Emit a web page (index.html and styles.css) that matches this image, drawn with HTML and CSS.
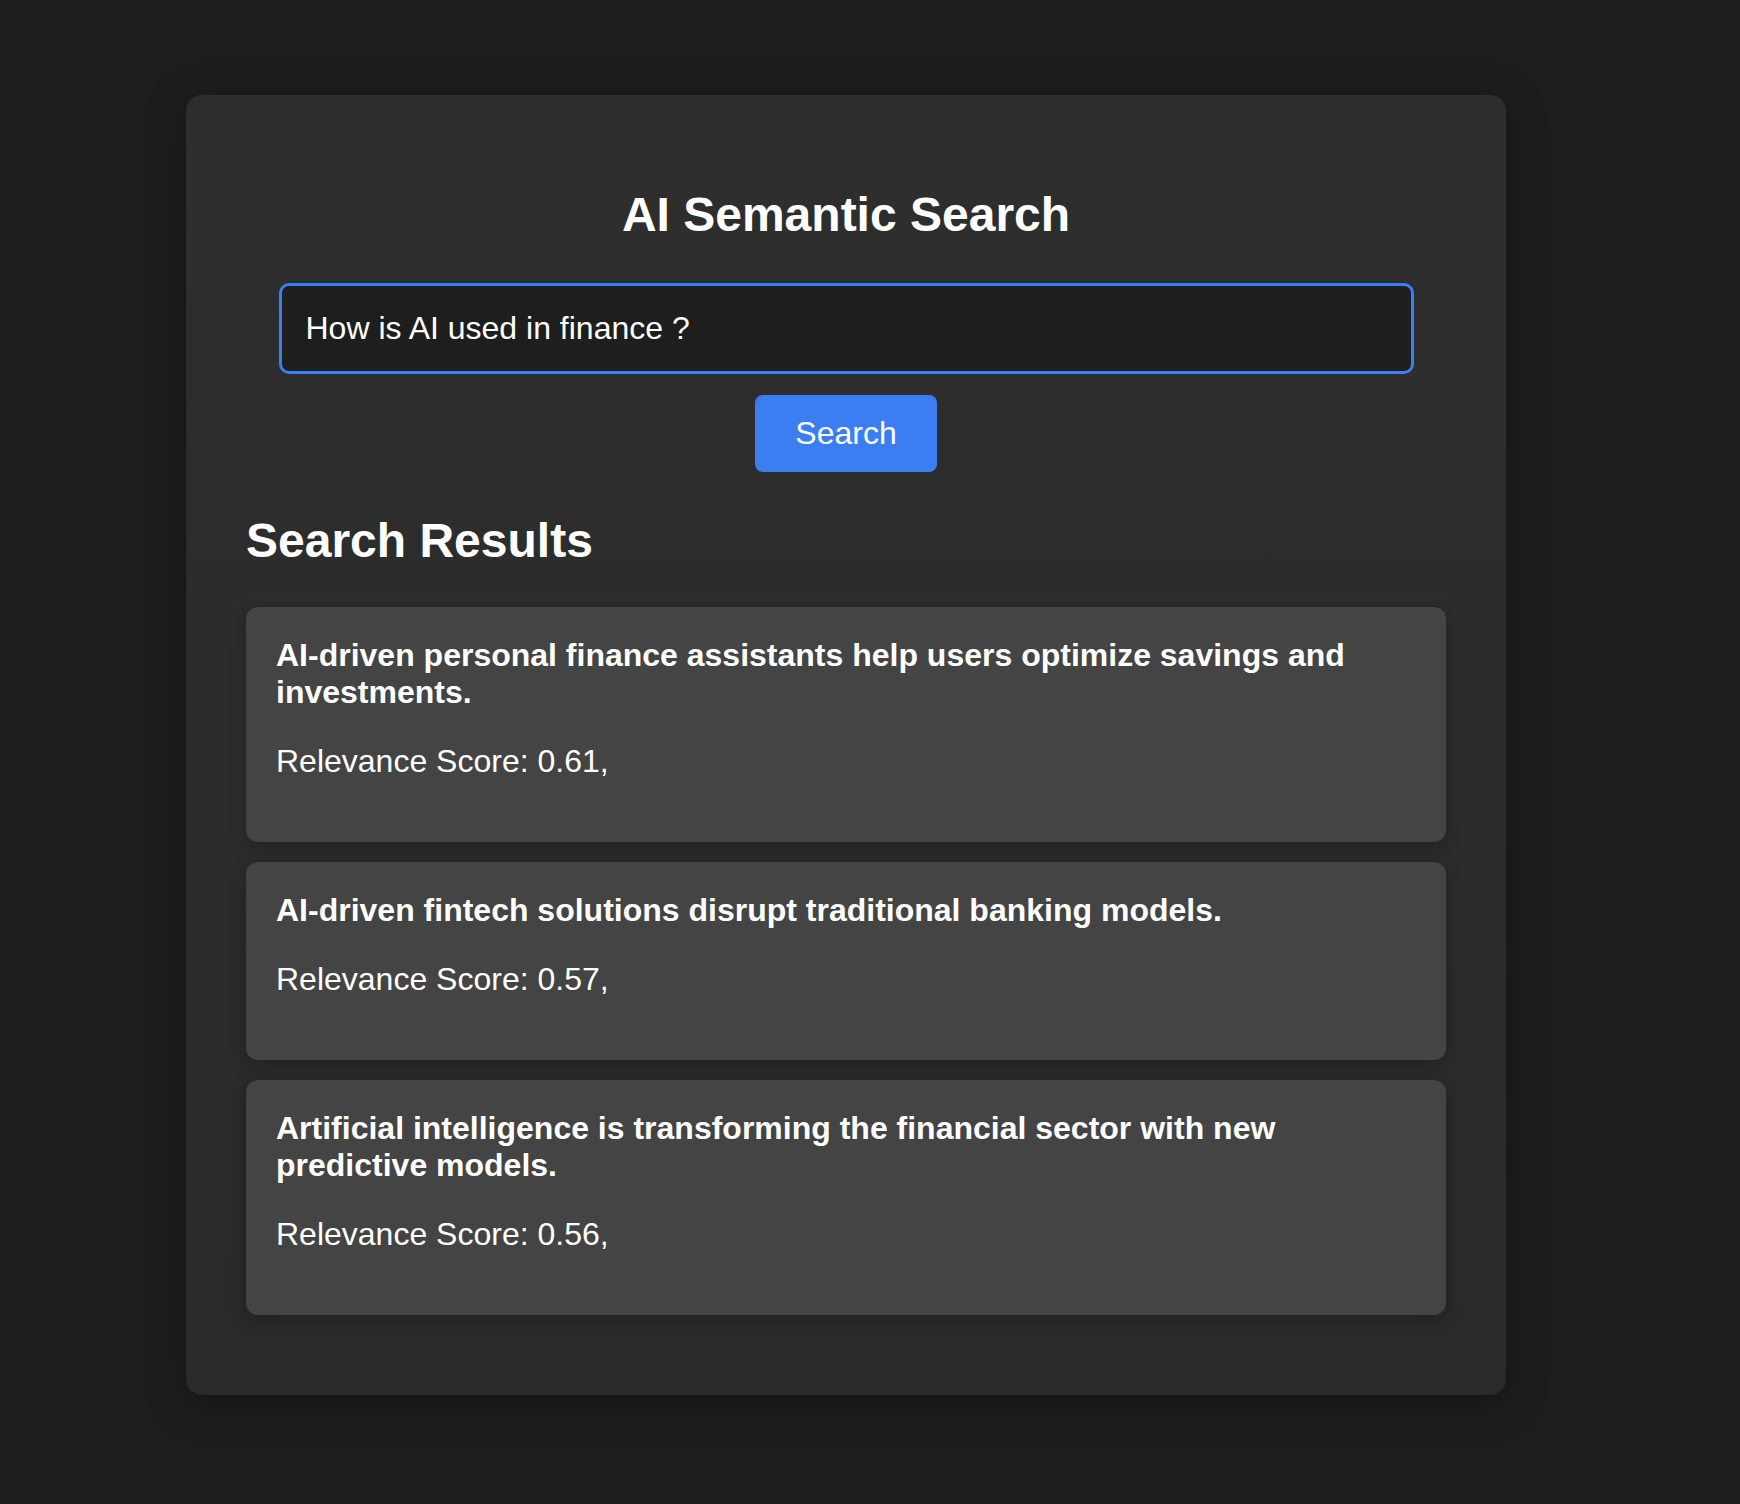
FILE: index.html
```html
<!DOCTYPE html>
<html lang="en">
<head>
<meta charset="utf-8">
<title>AI Semantic Search</title>
<link rel="stylesheet" href="styles.css">
</head>
<body>
  <main class="panel">
    <h1 class="title">AI Semantic Search</h1>
    <div class="search">
      <input class="search-input" type="text" value="How is AI used in finance ?">
      <button class="search-btn" type="button">Search</button>
    </div>
    <h2 class="results-title">Search Results</h2>
    <div class="results">
      <div class="result">
        <p class="result-text">AI-driven personal finance assistants help users optimize savings and investments.</p>
        <p class="result-score">Relevance Score: 0.61,</p>
      </div>
      <div class="result">
        <p class="result-text">AI-driven fintech solutions disrupt traditional banking models.</p>
        <p class="result-score">Relevance Score: 0.57,</p>
      </div>
      <div class="result">
        <p class="result-text">Artificial intelligence is transforming the financial sector with new predictive models.</p>
        <p class="result-score">Relevance Score: 0.56,</p>
      </div>
    </div>
  </main>
</body>
</html>
```

FILE: styles.css
```css
* { box-sizing: border-box; }

html, body {
  margin: 0;
  padding: 0;
  background: #1e1e1e;
}

body {
  font-family: "Liberation Sans", Arial, Helvetica, sans-serif;
  color: #ffffff;
  padding: 95px 0 109px 186px;
  min-height: 1504px;
}

.panel {
  width: 1320px;
  padding: 60px 60px 80px;
  background: linear-gradient(180deg, #2e2e2e 0%, #2a2a2a 100%);
  border-radius: 16px;
  box-shadow: 0 8px 40px rgba(0, 0, 0, 0.35);
}

.title {
  margin: 32px 0 41px;
  font-size: 48px;
  font-weight: 700;
  text-align: center;
  line-height: normal;
}

.search {
  display: flex;
  flex-direction: column;
  align-items: center;
}

.search-input {
  width: 1135px;
  padding: 24px;
  font-family: inherit;
  font-size: 32px;
  line-height: normal;
  color: #ffffff;
  background: #1e1e1e;
  border: 3px solid #3a7ef1;
  border-radius: 10px;
  outline: none;
}

.search-btn {
  margin-top: 21px;
  padding: 20px 40px;
  font-family: inherit;
  font-size: 32px;
  line-height: normal;
  color: #ffffff;
  background: #3a7ef1;
  border: none;
  border-radius: 8px;
}

.results-title {
  margin: 41px 0 39px;
  font-size: 48px;
  font-weight: 700;
  line-height: normal;
}

.results {
  display: flex;
  flex-direction: column;
  gap: 20px;
}

.result {
  padding: 30px;
  background: #444444;
  border-radius: 12px;
  box-shadow: 0 4px 16px rgba(0, 0, 0, 0.25);
}

.result-text {
  margin: 0 0 32px;
  font-size: 32px;
  font-weight: 700;
  line-height: normal;
}

.result-score {
  margin: 0 0 32px;
  font-size: 32px;
  line-height: normal;
}
```
